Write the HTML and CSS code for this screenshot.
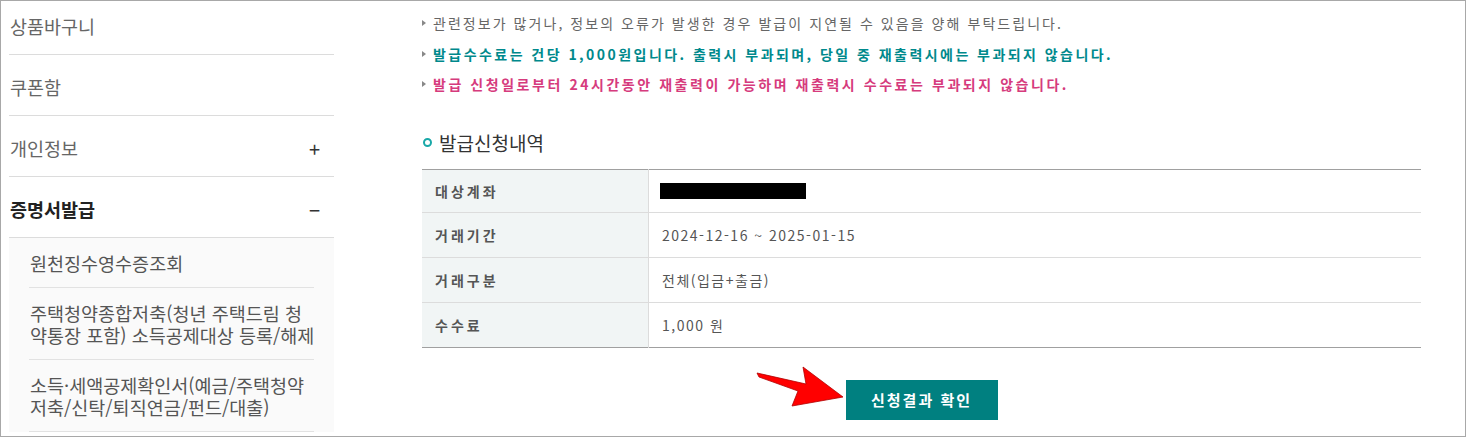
FILE: index.html
```html
<!DOCTYPE html>
<html lang="ko">

<head>
    <meta charset="UTF-8">
    <meta name="viewport" content="width=device-width, initial-scale=1.0">
    <title>증명서발급</title>
    <link rel="stylesheet" href="styles.css">
</head>

<body>
    <div class="frame">
        <aside class="side-menu">
            <ul class="menu">
                <li class="menu-item first">상품바구니</li>
                <li class="menu-item">쿠폰함</li>
                <li class="menu-item">개인정보<span class="toggle">+</span></li>
                <li class="menu-item active">증명서발급<span class="toggle">&minus;</span></li>
            </ul>
            <ul class="sub-menu">
                <li>원천징수영수증조회</li>
                <li>주택청약종합저축(청년 주택드림 청<br>약통장 포함) 소득공제대상 등록/해제</li>
                <li>소득·세액공제확인서(예금/주택청약<br>저축/신탁/퇴직연금/펀드/대출)</li>
            </ul>
        </aside>

        <main class="content">
            <ul class="notice">
                <li>관련정보가 많거나, 정보의 오류가 발생한 경우 발급이 지연될 수 있음을 양해 부탁드립니다.</li>
                <li class="teal">발급수수료는 건당 1,000원입니다. 출력시 부과되며, 당일 중 재출력시에는 부과되지 않습니다.</li>
                <li class="pink">발급 신청일로부터 24시간동안 재출력이 가능하며 재출력시 수수료는 부과되지 않습니다.</li>
            </ul>

            <h2 class="section-title">발급신청내역</h2>

            <table class="info-table">
                <tr>
                    <th>대상계좌</th>
                    <td><span class="masked"></span></td>
                </tr>
                <tr>
                    <th>거래기간</th>
                    <td>2024-12-16 ~ 2025-01-15</td>
                </tr>
                <tr>
                    <th>거래구분</th>
                    <td>전체(입금+출금)</td>
                </tr>
                <tr>
                    <th>수수료</th>
                    <td>1,000 원</td>
                </tr>
            </table>

            <div class="btn-area">
                <span class="btn-wrap">
                    <svg class="arrow" width="90" height="42" viewBox="0 0 90 42">
                        <polygon points="1,7 50,18 47,1 87,31 36,40 42,25 3,11" fill="#ff0000" stroke="#b00000" stroke-width="0.8" stroke-linejoin="round" />
                    </svg>
                    <button type="button" class="btn-primary">신청결과 확인</button>
                </span>
            </div>
        </main>
    </div>
</body>

</html>
```

FILE: styles.css
```css
body {
    margin: 0;
    padding: 0;
    background-color: #fff;
    font-family: "Noto Sans CJK KR", "Noto Sans", sans-serif;
}

ul {
    list-style: none;
    margin: 0;
    padding: 0;
}

.frame {
    display: flex;
    width: 1466px;
    height: 437px;
    box-sizing: border-box;
    border: 1px solid #a8a8a8;
    padding-left: 8px;
    overflow: hidden;
}

/* side menu */
.side-menu {
    width: 325px;
    flex-shrink: 0;
}

.menu {
    margin-top: -7px;
}

.menu-item {
    display: flex;
    justify-content: space-between;
    align-items: center;
    box-sizing: border-box;
    height: 61px;
    border-bottom: 1px solid #dcdcdc;
    padding: 4px 14px 0 1px;
    font-size: 18.5px;
    color: #666;
}

.menu-item.active {
    font-weight: bold;
    color: #222;
}

.toggle {
    font-size: 20px;
    font-weight: normal;
    color: #333;
}

.sub-menu {
    background-color: #fafafa;
    padding: 0 20px;
}

.sub-menu li {
    padding: 14px 0 13px 1px;
    border-bottom: 1px solid #e2e2e2;
    font-size: 18.5px;
    line-height: 22px;
    white-space: nowrap;
    color: #555;
}

/* content */
.content {
    margin-left: 88px;
    width: 999px;
}

.notice {
    margin-top: 7px;
}

.notice li {
    position: relative;
    padding-left: 11px;
    line-height: 30.5px;
    font-size: 14px;
    letter-spacing: 2.05px;
    white-space: nowrap;
    color: #666;
}

.notice li::before {
    content: "";
    position: absolute;
    left: 0;
    top: 12px;
    border-left: 4px solid #888;
    border-top: 3.5px solid transparent;
    border-bottom: 3.5px solid transparent;
}

.notice .teal {
    color: #00898c;
    font-weight: bold;
    letter-spacing: 2.45px;
}

.notice .pink {
    color: #d63b7d;
    font-weight: bold;
    letter-spacing: 2.55px;
}

.section-title {
    display: flex;
    align-items: center;
    gap: 7px;
    margin: 31px 0 14px 1px;
    font-size: 19px;
    font-weight: normal;
    line-height: 24px;
    color: #333;
}

.section-title::before {
    content: "";
    width: 5px;
    height: 5px;
    border: 2.5px solid #19a8a8;
    border-radius: 50%;
}

.info-table {
    width: 100%;
    border-collapse: collapse;
    border-top: 1px solid #a0a0a0;
    border-bottom: 1px solid #a0a0a0;
    font-size: 14px;
}

.info-table th,
.info-table td {
    height: 44px;
    padding: 0 13px;
    border-top: 1px solid #dcdcdc;
    text-align: left;
    color: #555;
}

.info-table tr:first-child th,
.info-table tr:first-child td {
    height: 42px;
    border-top: none;
}

.info-table th {
    width: 200px;
    background-color: #f1f5f5;
    border-right: 1px solid #dcdcdc;
    font-weight: bold;
    letter-spacing: 3px;
}

.info-table td {
    letter-spacing: 1.5px;
}

.masked {
    display: block;
    width: 146px;
    height: 16px;
    margin-left: -2px;
    background-color: #000;
}

.btn-area {
    display: flex;
    justify-content: center;
    margin-top: 32px;
}

.btn-wrap {
    position: relative;
    display: inline-block;
}

.arrow {
    position: absolute;
    left: -90px;
    top: -14px;
}

.btn-primary {
    width: 152px;
    height: 40px;
    border: none;
    background-color: #008080;
    color: #fff;
    font-family: "Noto Sans CJK KR", sans-serif;
    font-size: 15px;
    font-weight: bold;
    letter-spacing: 2px;
    cursor: pointer;
}
```
